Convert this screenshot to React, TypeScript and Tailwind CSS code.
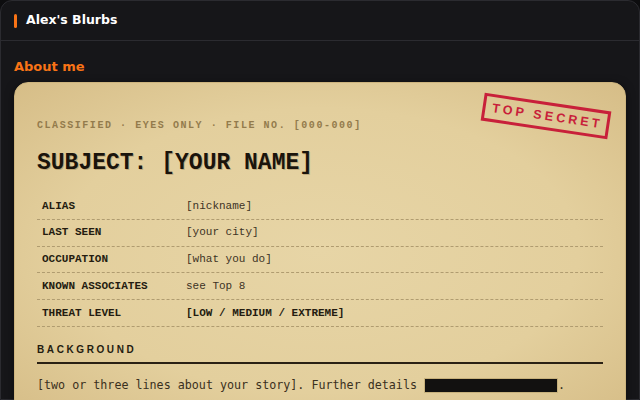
import React from 'react';

type Field = { label: string; value: string; strong?: boolean };

const FIELDS: Field[] = [
  { label: 'ALIAS', value: '[nickname]' },
  { label: 'LAST SEEN', value: '[your city]' },
  { label: 'OCCUPATION', value: '[what you do]' },
  { label: 'KNOWN ASSOCIATES', value: 'see Top 8' },
  { label: 'THREAT LEVEL', value: '[LOW / MEDIUM / EXTREME]', strong: true },
];

const mono = "font-['Liberation_Mono','Courier_New',monospace]";

const Stamp: React.FC = () => (
  <div className="absolute right-[15px] top-[19px] w-[128px] h-[28px] rotate-[8.5deg] border-[3px] border-[#c8203a] flex items-center justify-center">
    <span className="font-['Liberation_Sans',Arial,sans-serif] font-bold text-[12.5px] tracking-[3.2px] text-[#c8203a] pl-[3px]">
      TOP SECRET
    </span>
  </div>
);

const DossierCard: React.FC = () => (
  <div className="relative rounded-[14px] border border-[#cdb47e] bg-[radial-gradient(ellipse_at_center,#e7d5a6_0%,#e3cf9d_60%,#d6bd87_100%)] shadow-[0_2px_8px_rgba(0,0,0,0.5)] px-[22px] pt-[36px] pb-6">
    <Stamp />

    <div className={`${mono} font-bold text-[10px] leading-[14px] tracking-[1.55px] text-[#937b4c]`}>
      CLASSIFIED · EYES ONLY · FILE NO. [000-000]
    </div>

    <h1 className={`${mono} font-bold text-[23px] leading-[28px] text-[#1a140c] mt-[16px] [text-shadow:1px_1px_0_rgba(90,60,20,0.25)]`}>
      SUBJECT: [YOUR NAME]
    </h1>

    {/* field table */}
    <div className="mt-[16px]">
      {FIELDS.map((f) => (
        <div
          key={f.label}
          className={`${mono} text-[11px] h-[26.75px] flex items-center border-b border-dashed border-[#b09c70]`}
        >
          <span className="w-[149px] pl-[5px] font-bold text-[#241c10]">{f.label}</span>
          <span className={f.strong ? 'font-bold text-[#241c10]' : 'text-[#3d3325]'}>{f.value}</span>
        </div>
      ))}
    </div>

    <div className="mt-[16px] pb-[5px] border-b-2 border-[#2a2114] font-['Liberation_Sans',Arial,sans-serif] font-bold text-[10px] leading-[14px] tracking-[2.6px] text-[#241c10]">
      BACKGROUND
    </div>

    <p className="mt-[12px] font-['DejaVu_Sans_Mono',monospace] text-[11.7px] leading-[18px] text-[#3a3020]">
      [two or three lines about your story]. Further details{' '}
      <span className="inline-block align-middle w-[134px] h-[15px] bg-[#121110] border border-[#c7b17c]" />.
    </p>
  </div>
);

export default function App() {
  return (
    <div className="w-[640px] h-[400px] overflow-hidden bg-[#0d0d0f]">
      <div className="h-full rounded-t-[12px] border border-[#2b2b30] bg-[#161619]">
        <header className="h-[40px] flex items-center gap-[9px] px-[13px] border-b border-[#2b2b30]">
          <span className="w-[3px] h-[14px] rounded-full bg-[#f97316]" />
          <span className="font-['DejaVu_Sans',sans-serif] font-bold text-[12.5px] text-white">
            Alex's Blurbs
          </span>
        </header>

        <section className="px-[13px] pt-[16px]">
          <h2 className="font-['DejaVu_Sans',sans-serif] font-bold text-[13px] leading-[20px] text-[#f97316] mb-[5px]">
            About me
          </h2>
          <DossierCard />
        </section>
      </div>
    </div>
  );
}
